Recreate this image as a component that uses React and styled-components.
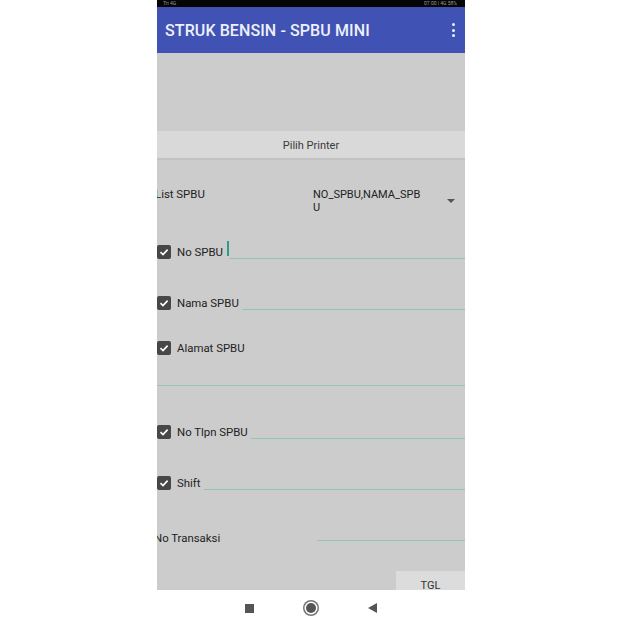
import React from "react";
import styled, { createGlobalStyle } from "styled-components";

const Global = createGlobalStyle`
  html, body { margin: 0; padding: 0; background: #ffffff; }
  body { font-family: Roboto, "Liberation Sans", sans-serif; }
`;

const Page = styled.div`
  width: 622px;
  height: 622px;
  display: flex;
  justify-content: flex-start;
  overflow: hidden;
`;

const Phone = styled.div`
  margin-left: 157px;
  width: 308px;
  height: 622px;
  display: flex;
  flex-direction: column;
`;

const StatusBar = styled.div`
  height: 7px;
  flex-shrink: 0;
  background: #050505;
  display: flex;
  justify-content: space-between;
  align-items: center;
  padding: 0 8px 0 6px;
  overflow: hidden;
  color: #9a9a9a;
  font-size: 5px;
  line-height: 7px;
`;

const AppBar = styled.div`
  height: 46px;
  flex-shrink: 0;
  background: #4053b5;
  display: flex;
  align-items: center;
  justify-content: space-between;
  padding: 0 10px 0 8px;
`;

const Title = styled.div`
  color: #eef0fa;
  font-size: 16px;
  font-weight: 500;
  letter-spacing: 0.1px;
`;

const Dots = styled.div`
  display: flex;
  flex-direction: column;
  gap: 2.5px;
  span {
    width: 3px;
    height: 3px;
    border-radius: 50%;
    background: #eef0fa;
  }
`;

const Content = styled.div`
  height: 537px;
  flex-shrink: 0;
  background: #cccccc;
  display: flex;
  flex-direction: column;
  overflow: hidden;
  color: #222;
  font-size: 11.4px;
  & > * { flex-shrink: 0; }
`;

const PrinterButton = styled.div`
  margin-top: 78px;
  height: 29px;
  background: #d9d9d9;
  border-bottom: 2px solid #c2c2c2;
  display: flex;
  align-items: center;
  justify-content: center;
  padding-top: 2px;
  box-sizing: border-box;
  color: #3a3a3a;
  font-size: 11px;
`;

const ListRow = styled.div`
  height: 82px;
  display: flex;
  align-items: flex-start;
  padding-top: 28px;
  box-sizing: border-box;
`;

const ListLabel = styled.div`
  margin-left: -2px;
  width: 158px;
  line-height: 13px;
`;

const Spinner = styled.div`
  flex: 1;
  display: flex;
  justify-content: space-between;
  align-items: flex-start;
  padding-right: 10px;
`;

const SpinnerText = styled.div`
  width: 112px;
  line-height: 13px;
  font-size: 11px;
  word-break: break-all;
`;

const Arrow = styled.div`
  margin-top: 11px;
  width: 0;
  height: 0;
  border-left: 4px solid transparent;
  border-right: 4px solid transparent;
  border-top: 4px solid #555;
`;

const FieldRow = styled.div`
  height: 20px;
  margin-top: ${(p) => p.$gap}px;
  display: flex;
  align-items: center;
`;

const Check = styled.div`
  width: 14px;
  height: 14px;
  border-radius: 2px;
  background: #474747;
  display: flex;
  align-items: center;
  justify-content: center;
  flex-shrink: 0;
`;

const Label = styled.div`
  margin-left: ${(p) => (p.$plain ? -3 : 6)}px;
  white-space: nowrap;
  line-height: 14px;
  ${(p) => (p.$width ? `width: ${p.$width}px; flex-shrink: 0;` : "")}
`;

const Input = styled.div`
  position: relative;
  flex: 1;
  align-self: flex-start;
  height: ${(p) => p.$h || 16}px;
  margin-left: ${(p) => p.$ml ?? 3}px;
  border-bottom: 1px solid #8dc6b6;
`;

const Cursor = styled.span`
  position: absolute;
  left: -2px;
  top: -1px;
  width: 2px;
  height: 15px;
  background: #2f9c86;
`;

const MultiInput = styled.div`
  height: 27px;
  border-bottom: 1px solid #94c5b8;
`;

const TglButton = styled.div`
  margin-top: 23px;
  align-self: flex-end;
  width: 69px;
  height: 24px;
  background: #dcdcdc;
  display: flex;
  justify-content: center;
  padding-top: 8px;
  box-sizing: border-box;
  color: #333;
  font-size: 11px;
`;

const NavBar = styled.div`
  height: 32px;
  flex-shrink: 0;
  background: #ffffff;
  display: flex;
  align-items: center;
  justify-content: center;
  gap: 52px;
  padding-top: 4px;
  box-sizing: border-box;
`;

const NavSquare = styled.div`
  width: 9px;
  height: 9px;
  background: #555;
`;

const NavCircle = styled.div`
  width: 10px;
  height: 10px;
  border-radius: 50%;
  background: #555;
  box-shadow: 0 0 0 1.5px #fff, 0 0 0 3px #777;
`;

const NavBack = styled.div`
  width: 0;
  height: 0;
  border-top: 5px solid transparent;
  border-bottom: 5px solid transparent;
  border-right: 9px solid #555;
`;

const CheckIcon = () => (
  <svg width="10" height="10" viewBox="0 0 10 10">
    <path d="M1.5 5.2 L4 7.6 L8.6 2.6" fill="none" stroke="#fff" strokeWidth="1.6" />
  </svg>
);

const CheckField = ({ label, gap, children }) => (
  <FieldRow $gap={gap}>
    <Check>
      <CheckIcon />
    </Check>
    <Label>{label}</Label>
    {children}
  </FieldRow>
);

export default function App() {
  return (
    <Page>
      <Global />
      <Phone>
        <StatusBar>
          <span>Tri 4G</span>
          <span>07.00 | 4G 58%</span>
        </StatusBar>
        <AppBar>
          <Title>STRUK BENSIN - SPBU MINI</Title>
          <Dots>
            <span />
            <span />
            <span />
          </Dots>
        </AppBar>
        <Content>
          <PrinterButton>Pilih Printer</PrinterButton>
          <ListRow>
            <ListLabel>List SPBU</ListLabel>
            <Spinner>
              <SpinnerText>NO_SPBU,NAMA_SPBU</SpinnerText>
              <Arrow />
            </Spinner>
          </ListRow>
          <CheckField label="No SPBU" gap={0}>
            <Input $ml={6}>
              <Cursor />
            </Input>
          </CheckField>
          <CheckField label="Nama SPBU" gap={31}>
            <Input />
          </CheckField>
          <CheckField label="Alamat SPBU" gap={25} />
          <MultiInput />
          <CheckField label="No Tlpn SPBU" gap={36}>
            <Input />
          </CheckField>
          <CheckField label="Shift" gap={31}>
            <Input />
          </CheckField>
          <FieldRow $gap={35}>
            <Label $plain $width={163}>No Transaksi</Label>
            <Input $h={12} $ml={0} />
          </FieldRow>
          <TglButton>TGL</TglButton>
        </Content>
        <NavBar>
          <NavSquare />
          <NavCircle />
          <NavBack />
        </NavBar>
      </Phone>
    </Page>
  );
}
